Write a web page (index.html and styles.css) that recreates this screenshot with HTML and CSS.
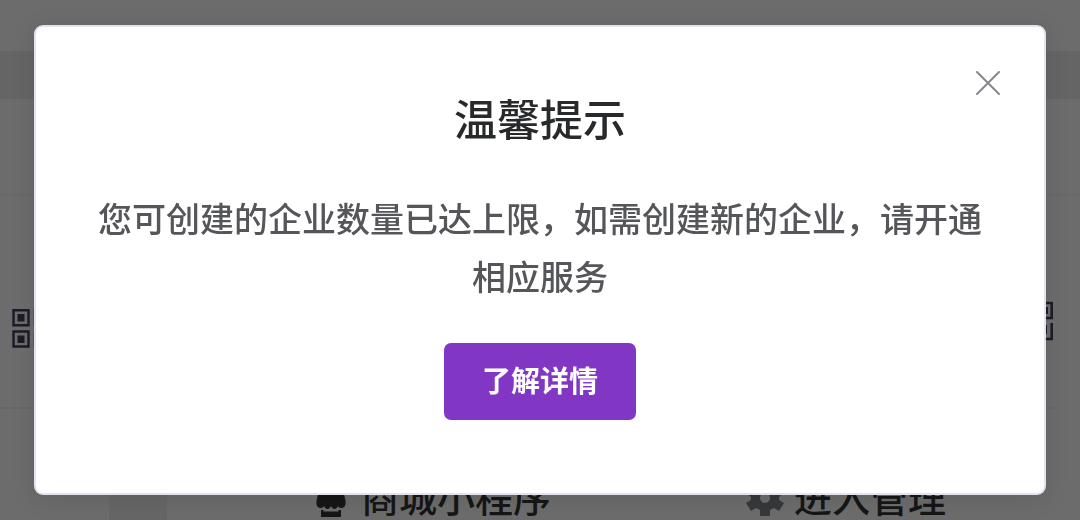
FILE: index.html
```html
<!DOCTYPE html>
<html lang="zh-CN">
<head>
<meta charset="utf-8">
<meta name="viewport" content="width=device-width, initial-scale=1">
<title>温馨提示</title>
<link rel="stylesheet" href="styles.css">
</head>
<body>
<div class="page" aria-hidden="true">
  <div class="topbar"></div>
  <div class="band"></div>
  <div class="summary"></div>
  <div class="codes">
    <svg class="qr" viewBox="0 0 40 40">
      <path fill="none" stroke-width="2.4" d="M1.5 2.2h15v15h-15zM1.5 23.5h15v15h-15zM23 2h16v15H23zM23 39V23M29 39h10V23"/>
      <path class="qr-core" d="M5.5 6h7v7.4h-7zM5.5 27.5h7v7.4h-7zM27 6h8v7h-8z"/>
    </svg>
    <svg class="qr qr-end" viewBox="0 0 40 40">
      <path fill="none" stroke-width="2.6" d="M1 1h16v16H1zM1 23h16v16H1zM23 2h14.700v15H23zM23 23v15h14.700V22"/>
      <path class="qr-core" d="M5 5h8v8H5zM5 27h8v8H5zM27 6h7v7h-7zM31 24h2v9h-2z"/>
    </svg>
  </div>
  <div class="lower">
    <div class="side"></div>
    <div class="gutter"></div>
    <div class="actions">
      <div class="action">
        <svg class="icon shop" viewBox="0 0 30 36">
          <path d="M4 4h22l3.500 16c.5 5-1.500 7-4 7-2 0-3-1-3.500-2-1 2-2 3-3.500 3s-2.500-1-3.500-3c-1 2-2 3-3.500 3S9 27 8 25c-.5 1-1.500 2-3.500 2-2.500 0-4.500-2-4-7z"/>
          <path d="M5 29h2.500v1.500h15V29H25v7H5z"/>
        </svg>
        <span>商城小程序</span>
      </div>
      <div class="action">
        <svg class="icon gear" viewBox="0 0 38 38">
          <path fill-rule="evenodd" d="M14 1h10v6l4 2 5-3 5 8-5 4v3l5 3-5 8-5-3-4 2v6H14v-6l-4-2-5 3-5-8 5-3v-3l-5-4 5-8 5 3 4-2zM19 14a5 5 0 1 0 0 10 5 5 0 0 0 0-10z"/>
        </svg>
        <span>进入管理</span>
      </div>
    </div>
  </div>
</div>
<div class="overlay">
  <section class="dialog" role="dialog" aria-modal="true" aria-labelledby="dialog-title">
    <button class="close" type="button" aria-label="关闭">
      <svg viewBox="0 0 24 24"><path d="M1 1l22 22M23 1L1 23"/></svg>
    </button>
    <h1 class="title" id="dialog-title">温馨提示</h1>
    <p class="message">您可创建的企业数量已达上限，如需创建新的企业，请开通相应服务</p>
    <button class="primary" type="button">了解详情</button>
  </section>
</div>
</body>
</html>
```

FILE: styles.css
```css
* {
  box-sizing: border-box;
}

body {
  margin: 0;
  background: #6c6c6c;
  font-family: "Noto Sans CJK SC", "Liberation Sans", sans-serif;
}

.page {
  display: flex;
  flex-direction: column;
  height: 100vh;
  overflow: hidden;
  color: #161616;
}

.topbar {
  flex: 0 0 51px;
}

.band {
  flex: 0 0 48px;
  background: #656565;
}

.summary {
  flex: 0 0 97px;
  border-bottom: 2px solid #686868;
}

.codes {
  flex: 0 0 213px;
  display: flex;
  justify-content: space-between;
  align-items: flex-start;
  margin-right: 26px;
  padding: 112px 0 0 12px;
  border-bottom: 2px solid #666666;
}

.qr {
  width: 40px;
  height: 40px;
  fill: #1c1b27;
  stroke: #1c1b27;
}

.qr-core {
  stroke: none;
}

.qr-end {
  margin-top: -7px;
}

.lower {
  flex: 1 0 auto;
  display: flex;
}

.side {
  flex: 0 0 109px;
}

.gutter {
  flex: 0 0 58px;
  background: #666666;
}

.actions {
  flex: 1;
  display: grid;
  grid-template-columns: 430px 1fr;
  align-items: start;
  padding: 65px 0 0 149px;
}

.action {
  display: flex;
  align-items: center;
  font-size: 38px;
  font-weight: 500;
  line-height: 44px;
}

.icon {
  flex: none;
}

.shop {
  width: 30px;
  height: 36px;
  margin: 6px 15px 0 0;
  fill: #161616;
}

.gear {
  width: 38px;
  height: 38px;
  margin: 4px 10px 0 0;
  fill: #36383a;
}

.overlay {
  position: fixed;
  inset: 0;
  display: flex;
  align-items: flex-start;
  padding: 25px 34px 0;
}

.dialog {
  position: relative;
  flex: 1;
  display: flex;
  flex-direction: column;
  align-items: center;
  padding: 60px 62px 73px;
  border: 2px solid #e1e4f0;
  border-radius: 9px;
  background: #ffffff;
  box-shadow: 0 4px 24px rgba(0, 0, 0, 0.1);
}

.close {
  position: absolute;
  top: 44px;
  right: 44px;
  width: 24px;
  height: 24px;
  padding: 0;
  border: 0;
  background: none;
  cursor: pointer;
}

.close svg {
  display: block;
  fill: none;
  stroke: #86888e;
  stroke-width: 2;
  stroke-linecap: round;
}

.title {
  margin: 0 0 42px;
  color: #27292b;
  font-size: 43px;
  font-weight: 500;
  line-height: 60px;
}

.message {
  margin: 0 0 38px;
  color: #55565a;
  font-size: 34px;
  font-weight: 500;
  line-height: 58px;
  text-align: center;
}

.primary {
  padding: 0 38px 4px;
  border: 0;
  border-radius: 7px;
  background: #8236c4;
  color: #ffffff;
  font-family: inherit;
  font-size: 29px;
  font-weight: 700;
  line-height: 73px;
  cursor: pointer;
}
```
